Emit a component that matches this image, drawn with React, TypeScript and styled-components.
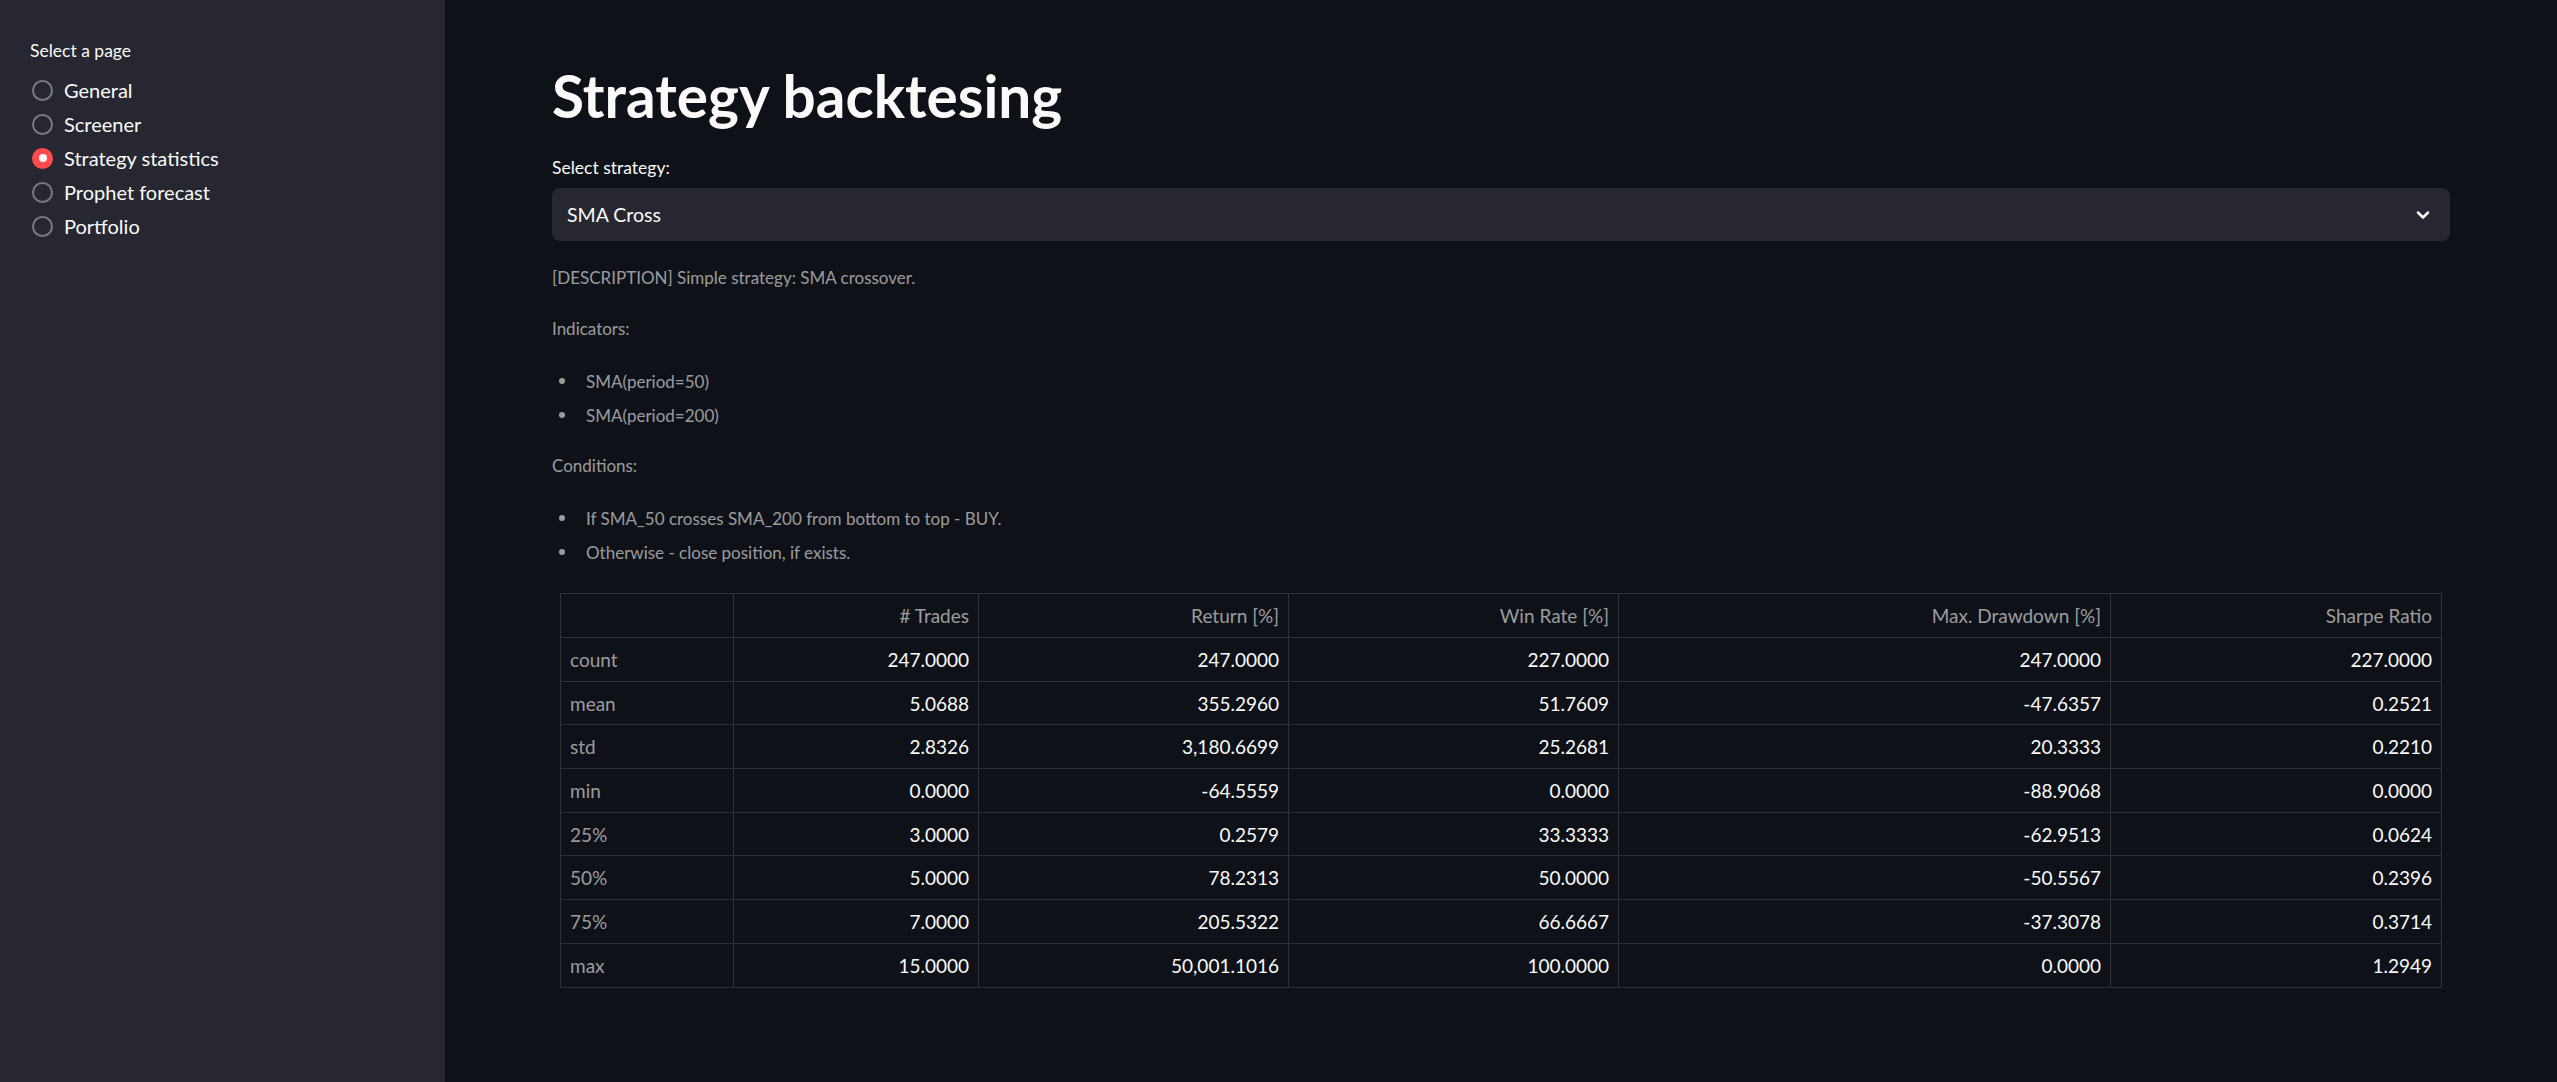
import React from "react";
import styled, { createGlobalStyle } from "styled-components";

const GlobalStyle = createGlobalStyle`
  html, body {
    margin: 0;
    padding: 0;
    background: #0e1117;
    color: #fafafa;
    font-family: "Source Sans Pro", Lato, "Noto Sans", sans-serif;
  }
  * {
    box-sizing: border-box;
  }
`;

const Layout = styled.div`
  display: grid;
  grid-template-columns: 445px 1fr;
  min-height: 1082px;
`;

const Sidebar = styled.aside`
  background: #262730;
  padding: 37px 0 0 30px;
`;

const WidgetLabel = styled.div`
  font-size: 17.5px;
  line-height: 28px;
  color: #fafafa;
`;

const RadioGroup = styled.div`
  display: flex;
  flex-direction: column;
  margin-top: 8px;
`;

const RadioRow = styled.label`
  display: flex;
  align-items: center;
  gap: 11px;
  height: 34px;
  font-size: 20px;
  color: #fafafa;
  cursor: pointer;
`;

const RadioCircle = styled.span<{ $checked: boolean }>`
  margin-left: 2px;
  width: 21px;
  height: 21px;
  border-radius: 50%;
  display: flex;
  align-items: center;
  justify-content: center;
  border: ${(p) => (p.$checked ? "none" : "2px solid rgba(250, 250, 250, 0.4)")};
  background: ${(p) => (p.$checked ? "#ff4b4b" : "transparent")};

  &::after {
    content: "";
    display: ${(p) => (p.$checked ? "block" : "none")};
    width: 8px;
    height: 8px;
    border-radius: 50%;
    background: #fafafa;
  }
`;

const Main = styled.main`
  padding: 59px 107px 40px 107px;
  min-width: 0;
`;

const Title = styled.h1`
  margin: 0 0 23px;
  font-size: 58.5px;
  line-height: 72px;
  font-weight: 700;
  color: #fafafa;
`;

const SelectLabel = styled(WidgetLabel)`
  margin-bottom: 6px;
`;

const SelectBox = styled.div`
  height: 53px;
  border-radius: 8px;
  background: #262730;
  display: flex;
  align-items: center;
  justify-content: space-between;
  padding: 0 17px 0 15px;
  font-size: 19.5px;
  color: #fafafa;
  margin-bottom: 23px;
`;

const Caption = styled.p<{ $gap: number }>`
  margin: 0 0 ${(p) => p.$gap}px;
  font-size: 17px;
  line-height: 28px;
  color: rgba(250, 250, 250, 0.6);
`;

const BulletList = styled.ul<{ $gap: number }>`
  list-style: none;
  margin: 0 0 ${(p) => p.$gap}px;
  padding: 0;
`;

const BulletItem = styled.li`
  display: flex;
  align-items: center;
  height: 34px;
  font-size: 17px;
  color: rgba(250, 250, 250, 0.6);

  &::before {
    content: "";
    width: 6px;
    height: 6px;
    border-radius: 50%;
    background: rgba(250, 250, 250, 0.6);
    margin: 0 21px 0 7px;
    flex-shrink: 0;
  }
`;

const TableWrap = styled.div`
  margin: 0 9px 0 8px;
`;

const Table = styled.table`
  width: 100%;
  table-layout: fixed;
  border-collapse: collapse;
  font-size: 19px;
`;

const Col = styled.col<{ $w: number }>`
  width: ${(p) => p.$w}px;
`;

const HeadCell = styled.th`
  height: 44px;
  padding: 0 9px;
  border: 1px solid #2f3138;
  text-align: right;
  font-weight: 400;
  color: rgba(250, 250, 250, 0.6);
  white-space: nowrap;
`;

const IndexCell = styled.th`
  height: 43.7px;
  padding: 0 9px;
  border: 1px solid #2f3138;
  text-align: left;
  font-weight: 400;
  color: rgba(250, 250, 250, 0.6);
`;

const Cell = styled.td`
  height: 43.7px;
  padding: 0 9px;
  border: 1px solid #2f3138;
  text-align: right;
  color: #fafafa;
  white-space: nowrap;
`;

const pages = ["General", "Screener", "Strategy statistics", "Prophet forecast", "Portfolio"];

const columns = ["# Trades", "Return [%]", "Win Rate [%]", "Max. Drawdown [%]", "Sharpe Ratio"];
const colWidths = [173, 245, 310, 330, 492, 331];

const rows: [string, string[]][] = [
  ["count", ["247.0000", "247.0000", "227.0000", "247.0000", "227.0000"]],
  ["mean", ["5.0688", "355.2960", "51.7609", "-47.6357", "0.2521"]],
  ["std", ["2.8326", "3,180.6699", "25.2681", "20.3333", "0.2210"]],
  ["min", ["0.0000", "-64.5559", "0.0000", "-88.9068", "0.0000"]],
  ["25%", ["3.0000", "0.2579", "33.3333", "-62.9513", "0.0624"]],
  ["50%", ["5.0000", "78.2313", "50.0000", "-50.5567", "0.2396"]],
  ["75%", ["7.0000", "205.5322", "66.6667", "-37.3078", "0.3714"]],
  ["max", ["15.0000", "50,001.1016", "100.0000", "0.0000", "1.2949"]],
];

const Chevron = () => (
  <svg width="20" height="20" viewBox="0 0 24 24" fill="none" stroke="#fafafa" strokeWidth="3" strokeLinecap="round" strokeLinejoin="round">
    <path d="M6 9l6 6 6-6" />
  </svg>
);

const App = () => {
  const selected = "Strategy statistics";

  return (
    <>
      <GlobalStyle />
      <Layout>
        <Sidebar>
          <WidgetLabel>Select a page</WidgetLabel>
          <RadioGroup>
            {pages.map((page) => (
              <RadioRow key={page}>
                <RadioCircle $checked={page === selected} />
                {page}
              </RadioRow>
            ))}
          </RadioGroup>
        </Sidebar>

        <Main>
          <Title>Strategy backtesing</Title>
          <SelectLabel>Select strategy:</SelectLabel>
          <SelectBox>
            <span>SMA Cross</span>
            <Chevron />
          </SelectBox>

          <Caption $gap={23}>[DESCRIPTION] Simple strategy: SMA crossover.</Caption>
          <Caption $gap={21}>Indicators:</Caption>
          <BulletList $gap={20}>
            <BulletItem>SMA(period=50)</BulletItem>
            <BulletItem>SMA(period=200)</BulletItem>
          </BulletList>
          <Caption $gap={21}>Conditions:</Caption>
          <BulletList $gap={24}>
            <BulletItem>If SMA_50 crosses SMA_200 from bottom to top - BUY.</BulletItem>
            <BulletItem>Otherwise - close position, if exists.</BulletItem>
          </BulletList>

          <TableWrap>
            <Table>
              <colgroup>
                {colWidths.map((w, i) => (
                  <Col key={i} $w={w} />
                ))}
              </colgroup>
              <thead>
                <tr>
                  <HeadCell />
                  {columns.map((c) => (
                    <HeadCell key={c}>{c}</HeadCell>
                  ))}
                </tr>
              </thead>
              <tbody>
                {rows.map(([label, values]) => (
                  <tr key={label}>
                    <IndexCell>{label}</IndexCell>
                    {values.map((v, i) => (
                      <Cell key={i}>{v}</Cell>
                    ))}
                  </tr>
                ))}
              </tbody>
            </Table>
          </TableWrap>
        </Main>
      </Layout>
    </>
  );
};

export default App;
